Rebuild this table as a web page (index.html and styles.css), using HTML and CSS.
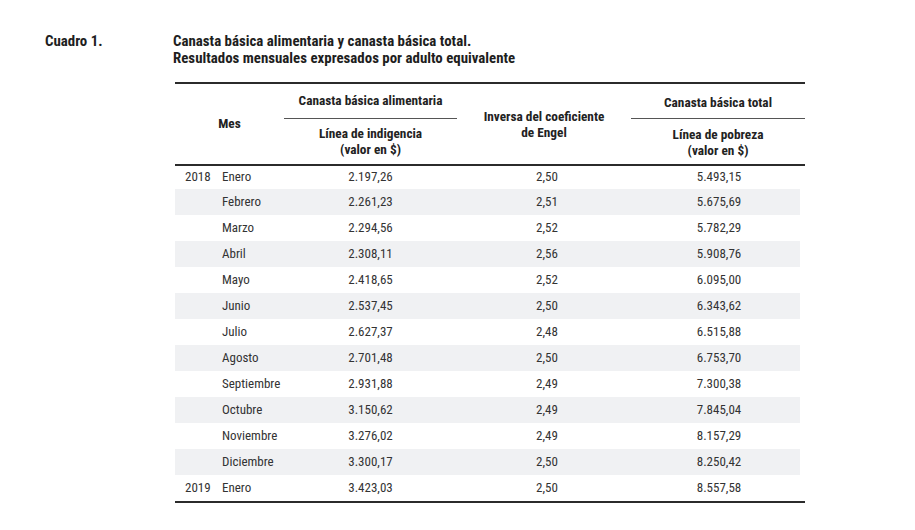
FILE: index.html
```html
<!DOCTYPE html>
<html lang="es">
<head>
<meta charset="utf-8">
<title>Cuadro 1</title>
<link rel="stylesheet" href="styles.css">
</head>
<body>
<div class="page">
  <div class="caption">
    <div class="label">Cuadro 1.</div>
    <div class="title">Canasta básica alimentaria y canasta básica total.<br>Resultados mensuales expresados por adulto equivalente</div>
  </div>
  <table class="data">
    <colgroup>
      <col class="k-yr"><col class="k-mo"><col class="k-c1"><col class="k-c2"><col class="k-c3">
    </colgroup>
    <thead>
      <tr class="h1">
        <th class="mes" colspan="2" rowspan="2">Mes</th>
        <th class="grp c1">Canasta básica alimentaria</th>
        <th class="inv" rowspan="2">Inversa del coeficiente<br>de Engel</th>
        <th class="grp c3">Canasta básica total</th>
      </tr>
      <tr class="h2">
        <th class="sub c1">Línea de indigencia<br>(valor en $)</th>
        <th class="sub c3">Línea de pobreza<br>(valor en $)</th>
      </tr>
    </thead>
    <tbody>
      <tr><td class="yr">2018</td><td class="mo">Enero</td><td class="v1">2.197,26</td><td class="v2">2,50</td><td class="v3">5.493,15</td></tr>
      <tr><td class="yr"></td><td class="mo">Febrero</td><td class="v1">2.261,23</td><td class="v2">2,51</td><td class="v3">5.675,69</td></tr>
      <tr><td class="yr"></td><td class="mo">Marzo</td><td class="v1">2.294,56</td><td class="v2">2,52</td><td class="v3">5.782,29</td></tr>
      <tr><td class="yr"></td><td class="mo">Abril</td><td class="v1">2.308,11</td><td class="v2">2,56</td><td class="v3">5.908,76</td></tr>
      <tr><td class="yr"></td><td class="mo">Mayo</td><td class="v1">2.418,65</td><td class="v2">2,52</td><td class="v3">6.095,00</td></tr>
      <tr><td class="yr"></td><td class="mo">Junio</td><td class="v1">2.537,45</td><td class="v2">2,50</td><td class="v3">6.343,62</td></tr>
      <tr><td class="yr"></td><td class="mo">Julio</td><td class="v1">2.627,37</td><td class="v2">2,48</td><td class="v3">6.515,88</td></tr>
      <tr><td class="yr"></td><td class="mo">Agosto</td><td class="v1">2.701,48</td><td class="v2">2,50</td><td class="v3">6.753,70</td></tr>
      <tr><td class="yr"></td><td class="mo">Septiembre</td><td class="v1">2.931,88</td><td class="v2">2,49</td><td class="v3">7.300,38</td></tr>
      <tr><td class="yr"></td><td class="mo">Octubre</td><td class="v1">3.150,62</td><td class="v2">2,49</td><td class="v3">7.845,04</td></tr>
      <tr><td class="yr"></td><td class="mo">Noviembre</td><td class="v1">3.276,02</td><td class="v2">2,49</td><td class="v3">8.157,29</td></tr>
      <tr><td class="yr"></td><td class="mo">Diciembre</td><td class="v1">3.300,17</td><td class="v2">2,50</td><td class="v3">8.250,42</td></tr>
      <tr><td class="yr">2019</td><td class="mo">Enero</td><td class="v1">3.423,03</td><td class="v2">2,50</td><td class="v3">8.557,58</td></tr>
    </tbody>
  </table>
</div>
</body>
</html>
```
FILE: styles.css
```css
html, body {
  margin: 0;
  padding: 0;
  background: #ffffff;
}
body {
  font-family: "Roboto Condensed", Roboto, "Liberation Sans", sans-serif;
  font-stretch: 75%;
  color: #222;
  width: 915px;
  height: 530px;
  overflow: hidden;
}
.page {
  padding: 33px 0 0 45px;
}
.caption {
  display: flex;
  font-weight: bold;
  font-size: 14.9px;
  line-height: 17px;
  color: #1e1e1e;
}
.caption .label {
  width: 128px;
  flex: none;
}
.data {
  margin: 15px 0 0 130px;
  width: 630px;
  table-layout: fixed;
  border-collapse: collapse;
  font-size: 13px;
  color: #333;
}
.k-yr { width: 40px; }
.k-mo { width: 69px; }
.k-c1 { width: 173px; }
.k-c2 { width: 174px; }
.k-c3 { width: 174px; }
.data thead {
  border-top: 2px solid #2b2b2b;
  border-bottom: 2px solid #2b2b2b;
}
.data th {
  font-weight: bold;
  font-size: 13.3px;
  color: #222;
  line-height: 16px;
  padding: 0;
  text-align: center;
}
.h1 th { height: 33px; }
.h2 th { height: 42px; }
th.grp {
  position: relative;
  vertical-align: middle;
  padding-bottom: 2px;
}
th.grp::after {
  content: "";
  position: absolute;
  left: 0;
  right: 0;
  bottom: 0;
  border-bottom: 1.5px solid #555;
}
th.c3.grp { padding-top: 2px; padding-bottom: 0; }
th.sub { vertical-align: middle; padding-top: 1px; }
th.c3.sub { padding-top: 3px; }
th.inv { padding-top: 1px; }
.data td {
  height: 25px;
  padding: 0 0 1px 0;
  line-height: 16px;
}
.data tbody tr:first-child td { height: 19px; padding-bottom: 3px; padding-top: 1px; }
.data tbody tr:nth-child(even) td { background: #f0f1f3; }
.data tbody tr:nth-child(even) td:last-child { background: linear-gradient(to right, #f0f1f3 169px, transparent 169px); }
.data tbody tr:last-child td { border-bottom: 2px solid #2b2b2b; }
.data td.yr { padding-left: 10px; }
.data td.mo { padding-left: 7px; white-space: nowrap; }
.v1 { text-align: center; }
.data td.v2 { text-align: center; padding-left: 6px; }
.data td.v3 { text-align: center; padding-left: 2px; }
```
